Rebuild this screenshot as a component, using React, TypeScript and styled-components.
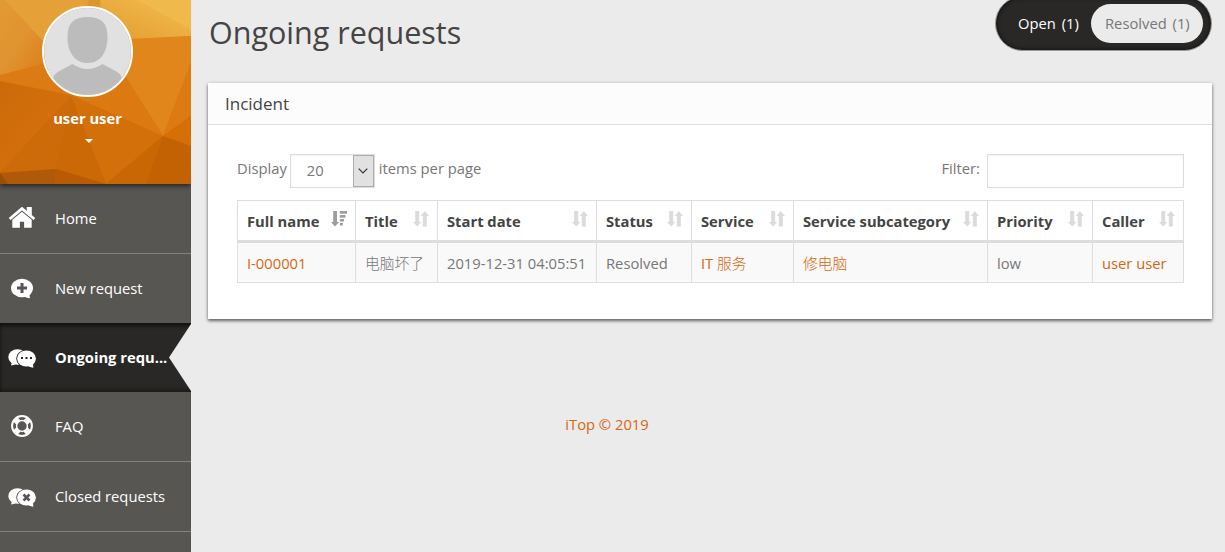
import styled, { createGlobalStyle, css } from "styled-components";

const COLUMNS = [
  { label: "Full name", width: 118, sorted: true },
  { label: "Title", width: 82 },
  { label: "Start date", width: 159 },
  { label: "Status", width: 95 },
  { label: "Service", width: 102 },
  { label: "Service subcategory", width: 194 },
  { label: "Priority", width: 105 },
  { label: "Caller", width: 91 },
];

const REQUEST = [
  { text: "I-000001", link: true },
  { han: "电脑坏了" },
  { text: "2019-12-31 04:05:51" },
  { text: "Resolved" },
  { text: "IT ", han: "服务", link: true },
  { han: "修电脑", link: true },
  { text: "low" },
  { text: "user user", link: true },
];

export default function App() {
  return (
    <>
      <GlobalStyle />
      <Page>
        <Sidebar>
          <UserCard>
            <Facets />
            <UserInfo>
              <Avatar>
                <AvatarPicture />
              </Avatar>
              <UserName>user user</UserName>
              <Caret />
            </UserInfo>
          </UserCard>
          <Menu>
            <MenuItem>
              <HomeIcon />
              <MenuLabel>Home</MenuLabel>
            </MenuItem>
            <MenuItem $noBorder>
              <NewIcon />
              <MenuLabel>New request</MenuLabel>
            </MenuItem>
            <MenuItem $active>
              <ChatsIcon kind="dots" />
              <MenuLabel>Ongoing requ...</MenuLabel>
              <Notch />
            </MenuItem>
            <MenuItem>
              <FaqIcon />
              <MenuLabel>FAQ</MenuLabel>
            </MenuItem>
            <MenuItem>
              <ChatsIcon kind="cross" />
              <MenuLabel>Closed requests</MenuLabel>
            </MenuItem>
          </Menu>
        </Sidebar>
        <Main>
          <TopBar>
            <Title>Ongoing requests</Title>
            <Tabs>
              <Tab>
                Open <span>(1)</span>
              </Tab>
              <Tab $selected>
                Resolved <span>(1)</span>
              </Tab>
            </Tabs>
          </TopBar>
          <Panel>
            <PanelHeader>Incident</PanelHeader>
            <PanelBody>
              <Controls>
                <Label>Display</Label>
                <Select>
                  <SelectValue>20</SelectValue>
                  <SelectButton>
                    <svg width="10" height="6" viewBox="0 0 10 6">
                      <path d="M.7.7 5 5 9.3.7" fill="none" stroke="#333" strokeWidth="1.200" />
                    </svg>
                  </SelectButton>
                </Select>
                <Label>items per page</Label>
                <Filter>
                  <Label>Filter:</Label>
                  <FilterInput />
                </Filter>
              </Controls>
              <Table>
                <colgroup>
                  {COLUMNS.map((c) => (
                    <Col key={c.label} $width={c.width} />
                  ))}
                </colgroup>
                <thead>
                  <tr>
                    {COLUMNS.map((c) => (
                      <Th key={c.label}>
                        <ThContent>
                          {c.label}
                          {c.sorted ? <SortedIcon /> : <SortIcon />}
                        </ThContent>
                      </Th>
                    ))}
                  </tr>
                </thead>
                <tbody>
                  <tr>
                    {REQUEST.map((cell, i) => (
                      <Td key={i} $link={cell.link}>
                        {cell.text}
                        {cell.han && <Han>{cell.han}</Han>}
                      </Td>
                    ))}
                  </tr>
                </tbody>
              </Table>
            </PanelBody>
          </Panel>
          <Footer>iTop © 2019</Footer>
        </Main>
      </Page>
    </>
  );
}

function Facets() {
  return (
    <FacetsSvg width="191" height="184" viewBox="0 0 191 184">
      <defs>
        <linearGradient id="base" x1="0.3" y1="0" x2="0.4" y2="1">
          <stop offset="0" stopColor="#e8a63c" />
          <stop offset="0.4" stopColor="#df861c" />
          <stop offset="0.7" stopColor="#d67209" />
          <stop offset="1" stopColor="#c66403" />
        </linearGradient>
        <linearGradient id="left" x1="0" y1="0" x2="1" y2="1">
          <stop offset="0" stopColor="#e39a35" />
          <stop offset="0.5" stopColor="#e09330" />
          <stop offset="1" stopColor="#db7c17" />
        </linearGradient>
        <linearGradient id="gold" x1="0" y1="1" x2="1" y2="0">
          <stop offset="0" stopColor="#e59c2e" />
          <stop offset="1" stopColor="#f2bd52" />
        </linearGradient>
        <linearGradient id="mid" x1="0" y1="0" x2="1" y2="1">
          <stop offset="0" stopColor="#cc6a0b" />
          <stop offset="1" stopColor="#d9740b" />
        </linearGradient>
      </defs>
      <rect width="191" height="184" fill="url(#base)" />
      <path d="M0 0h5l38 41 5 22L0 75z" fill="url(#left)" />
      <path d="M5 0h84l-3 16-43 25z" fill="#e5a038" />
      <path d="M100 0h36l55 30v6l-61 3-29-28z" fill="url(#gold)" />
      <path d="M136 0h55v30z" fill="#f0b94b" />
      <path d="M89 0h11l1 12H85z" fill="#dd962d" />
      <path d="M130 39l61-3v26l-28 74-37-58z" fill="#e0861b" />
      <path d="M191 62v54l-28 20z" fill="#dd7b12" />
      <path d="M191 116v30l-28-10z" fill="#d67006" />
      <path d="M0 75l43-11 28 31L0 81z" fill="#dc7a13" />
      <path d="M0 81l71 14L0 173z" fill="url(#mid)" />
      <path d="M71 95L56 169 0 173z" fill="#cd6a09" />
      <path d="M71 95l35 89-50-15z" fill="#cb6907" />
      <path d="M71 95l92 41-57 48z" fill="#d47009" />
      <path d="M71 95l55-18 37 59z" fill="#dc7a11" />
      <path d="M163 136l-17 48h-40z" fill="#c96703" />
      <path d="M163 136l28 10v38h-45z" fill="#c26202" />
      <path d="M0 173l56-4-1 15H0z" fill="#b05a09" />
      <path d="M56 169l50 15H55z" fill="#b75c03" />
      <path d="M0 173l8 11H0z" fill="#984f08" />
    </FacetsSvg>
  );
}

function AvatarPicture() {
  return (
    <svg width="87" height="87" viewBox="0 0 87 87">
      <rect width="87" height="87" fill="#e1e1e1" />
      <path
        d="M43.500 9c14 0 20 6 20 20 0 15-7 26-20 26s-20-11-20-26c0-14 6-20 20-20z"
        fill="#bcbcbc"
      />
      <path
        d="M28.500 56q15 10 30 0l14 7.500q6 3.500 6 11V87h-70V74.500q0-7.500 6-11z"
        fill="#bcbcbc"
      />
    </svg>
  );
}

function HomeIcon() {
  return (
    <MenuIcon width="28" height="24" viewBox="0 0 28 24">
      <path d="M14 .7 27.300 12l-1.800 2L14 4.500 2.500 14 .7 12z" />
      <path d="M18.800.900h5v9l-5-4.300z" />
      <path d="M14 5.700 23.700 13.700V21.700h-7.600v-6h-4.200v6H4.300v-8z" />
    </MenuIcon>
  );
}

function NewIcon() {
  return (
    <MenuIcon width="28" height="24" viewBox="0 0 28 24">
      <ellipse cx="14" cy="12" rx="11" ry="9.300" />
      <path d="M16 20 23.500 15.500q-.8 3.500-2 4l.5 2.800q-3.500 0-6-2z" />
      <path d="M14 7v10M9 12h10" stroke="#585652" strokeWidth="3" />
    </MenuIcon>
  );
}

function ChatsIcon({ kind }: { kind: "dots" | "cross" }) {
  const back = kind === "dots" ? "#292826" : "#585652";
  return (
    <MenuIcon width="28" height="24" viewBox="0 -1 28 24">
      <ellipse cx="9.500" cy="11" rx="9.200" ry="7.700" />
      <path d="M4 16 3 19.500q4-.5 6-2.500z" />
      <ellipse cx="18.500" cy="12.500" rx="10.300" ry="8.800" fill={back} />
      <ellipse cx="18.500" cy="12.500" rx="9.400" ry="8" />
      <path d="M19 19.500l6-2.500.3 4.800Q22 21.300 19 19.500z" />
      {kind === "dots" ? (
        <path d="M13 11h2v2h-2zm4.500 0h2v2h-2zm4.500 0h2v2h-2z" fill={back} />
      ) : (
        <path d="m15.500 9.500 6 6m0-6-6 6" stroke={back} strokeWidth="2.600" />
      )}
    </MenuIcon>
  );
}

function FaqIcon() {
  return (
    <MenuIcon width="28" height="24" viewBox="0 0 28 24">
      <circle cx="14" cy="12" r="9.900" fill="none" stroke="#fff" strokeWidth="2" />
      <circle cx="14" cy="12" r="5.400" fill="none" stroke="#fff" strokeWidth="1.500" />
      <path
        d="m7.500 5.500 2.800 2.800m10.200-2.800-2.800 2.800m2.800 10.200-2.800-2.800m-10.200 2.800 2.800-2.800"
        stroke="#fff"
        strokeWidth="6"
      />
    </MenuIcon>
  );
}

function SortIcon() {
  return (
    <HeadIcon width="16" height="16" viewBox="0 0 16 16" fill="#dbdbdb">
      <path d="M2.200 0h4v11h2.100L4.200 15.600 0 11h2.200z" />
      <path d="M9.800 15.500h4V5H16L11.800 0 7.600 5h2.200z" />
    </HeadIcon>
  );
}

function SortedIcon() {
  return (
    <HeadIcon width="16" height="16" viewBox="0 0 16 16" fill="#9d9d9d">
      <path d="M2.200 0h3.800v11h2.200L4 15.600 0 11h2.200z" />
      <path d="M8.800 0H16v2.700H8.800zM8.800 4h5.700v2.700H8.800zM8.800 8H13v2.500H8.800zM8.800 12h3v2.500h-3z" />
    </HeadIcon>
  );
}

const GlobalStyle = createGlobalStyle`
  *, *::before, *::after {
    box-sizing: border-box;
  }
  body {
    margin: 0;
    overflow: hidden;
    background: #ebebeb;
    color: #777;
    font-family: "Open Sans", "Noto Sans CJK SC", sans-serif;
    font-size: 14.75px;
    line-height: 20px;
  }
`;

const Page = styled.div`
  display: flex;
  height: 552px;
`;

const Sidebar = styled.aside`
  display: flex;
  flex: none;
  flex-direction: column;
  width: 191px;
  background: #585652;
  color: #fff;
`;

const UserCard = styled.div`
  display: grid;
  height: 184px;
  box-shadow: 0 2px 5px rgba(0, 0, 0, 0.6);
  clip-path: inset(0 0 -10px 0);

  > * {
    grid-area: 1 / 1;
  }
`;

const FacetsSvg = styled.svg`
  display: block;
`;

const UserInfo = styled.div`
  display: flex;
  flex-direction: column;
  align-items: center;
  z-index: 1;
  padding: 6px 16px 0 0;
`;

const Avatar = styled.div`
  width: 91px;
  height: 91px;
  border: 2px solid #fff;
  border-radius: 50%;
  overflow: hidden;

  svg {
    display: block;
  }
`;

const UserName = styled.div`
  margin-top: 11px;
  font-weight: 700;
`;

const Caret = styled.span`
  margin: 11px 0 0 2px;
  border: 4px solid transparent;
  border-top-color: #fff;
  border-bottom: 0;
`;

const Menu = styled.nav`
  display: flex;
  flex-direction: column;
`;

const MenuItem = styled.a<{ $active?: boolean; $noBorder?: boolean }>`
  display: flex;
  align-items: center;
  height: 70px;
  padding-left: 8px;
  border-bottom: 1px solid #83817e;

  ${(p) =>
    p.$noBorder &&
    css`
      height: 69px;
      border-bottom: 0;
    `}

  ${(p) =>
    p.$active &&
    css`
      height: 69px;
      border-bottom: 0;
      background: #292826;
      box-shadow: inset 0 4px 4px -1px rgba(0, 0, 0, 0.6), inset 0 -3px 4px -1px rgba(0, 0, 0, 0.4);
      font-weight: 700;
    `}
`;

const MenuIcon = styled.svg`
  flex: none;
  margin: -2px 19px 0 0;
  fill: #fff;
`;

const MenuLabel = styled.span`
  width: 114px;
  flex: none;
  padding-bottom: 2px;
  white-space: nowrap;
`;

const Notch = styled.span`
  flex: none;
  width: 22px;
  height: 67px;
  background: #ebebeb;
  clip-path: polygon(100% 0, 0 50%, 100% 100%);
`;

const Main = styled.main`
  flex: none;
  width: 1034px;
  padding: 0 13px 0 17px;
`;

const TopBar = styled.header`
  display: flex;
  justify-content: space-between;
  height: 83px;
`;

const Title = styled.h1`
  margin: 12px 0 0 1px;
  color: #444;
  font-size: 30.5px;
  font-weight: 400;
  line-height: 40px;
`;

const Tabs = styled.div`
  display: flex;
  align-items: center;
  width: 217px;
  height: 55px;
  margin-top: -4px;
  padding: 0 8px 0 10px;
  border: 1px solid #999;
  border-radius: 28px;
  background: #292826;
  box-shadow: inset 0 0 5px rgba(0, 0, 0, 0.7);
`;

const Tab = styled.a<{ $selected?: boolean }>`
  height: 39px;
  padding: 0 12px;
  border-radius: 20px;
  color: #fff;
  line-height: 39px;
  white-space: nowrap;

  span {
    margin-left: 2px;
  }

  ${(p) =>
    p.$selected &&
    css`
      width: 112px;
      margin-left: auto;
      padding: 0 14px;
      background: #ebebeb;
      color: #777;
    `}
`;

const Panel = styled.section`
  width: 1004px;
  height: 236px;
  background: #fff;
  box-shadow: 0 2px 3px rgba(0, 0, 0, 0.55), 0 0 4px rgba(0, 0, 0, 0.12);
`;

const PanelHeader = styled.div`
  height: 42px;
  padding-left: 17px;
  border-bottom: 1px solid #ddd;
  background: #fcfcfc;
  color: #444;
  font-size: 17px;
  line-height: 41px;
`;

const PanelBody = styled.div`
  padding: 29px 28px 0 29px;
`;

const Controls = styled.div`
  display: flex;
  height: 46px;
`;

const Label = styled.span`
  margin-top: 4px;
`;

const Select = styled.div`
  display: flex;
  width: 85px;
  height: 34px;
  margin: 0 4px 0 3px;
  border: 1px solid #ddd;
  box-shadow: inset 0 1px 2px rgba(0, 0, 0, 0.06);
`;

const SelectValue = styled.span`
  flex: 1;
  padding-left: 16px;
  line-height: 30px;
`;

const SelectButton = styled.span`
  display: flex;
  align-items: center;
  justify-content: center;
  width: 21px;
  height: 32px;
  border: 1px solid #adadad;
  background: #e1e1e1;
`;

const Filter = styled.div`
  display: flex;
  gap: 7px;
  margin-left: auto;
`;

const FilterInput = styled.input`
  width: 197px;
  height: 34px;
  border: 1px solid #ddd;
  box-shadow: inset 0 1px 2px rgba(0, 0, 0, 0.06);
  outline: 0;
`;

const Table = styled.table`
  width: 947px;
  border-spacing: 0;
  border-right: 1px solid #ddd;
  table-layout: fixed;
`;

const Col = styled.col<{ $width: number }>`
  width: ${(p) => p.$width}px;
`;

const Th = styled.th`
  height: 43px;
  padding: 0 8px 0 9px;
  border: solid #ddd;
  border-width: 1px 0 3px 1px;
  color: #444;
  text-align: left;
  white-space: nowrap;
`;

const ThContent = styled.div`
  display: flex;
  align-items: center;
  justify-content: space-between;
`;

const HeadIcon = styled.svg`
  margin-top: -3px;
`;

const Td = styled.td<{ $link?: boolean }>`
  height: 40px;
  padding: 0 0 0 9px;
  border: solid #ddd;
  border-width: 0 0 1px 1px;
  background: #f9f9f9;
  color: ${(p) => (p.$link ? "#d6670f" : "inherit")};
  white-space: nowrap;
`;

const Han = styled.span`
  font-weight: 300;
`;

const Footer = styled.footer`
  padding: 95px 206px 0 0;
  color: #d6670f;
  text-align: center;
`;
